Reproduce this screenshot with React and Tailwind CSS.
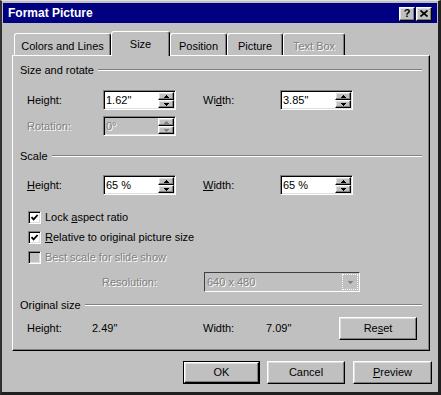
import React from "react";

const raised =
  "border border-t-white border-l-white border-r-black border-b-black shadow-[inset_-1px_-1px_0_#808080,inset_1px_1px_0_#dfdfdf]";
const sunken =
  "border border-t-[#808080] border-l-[#808080] border-r-white border-b-white shadow-[inset_1px_1px_0_#000,inset_-1px_-1px_0_#dfdfdf]";
const dis = "text-[#808080] [text-shadow:1px_1px_0_#fff]";

function Tri({ up, disabled }) {
  return (
    <svg width="5" height="3" viewBox="0 0 5 3" shapeRendering="crispEdges">
      {up ? (
        <polygon points="2.5,0 5,3 0,3" fill={disabled ? "#808080" : "#000"} />
      ) : (
        <polygon points="0,0 5,0 2.5,3" fill={disabled ? "#808080" : "#000"} />
      )}
    </svg>
  );
}

function SpinBtn({ up, disabled }) {
  return (
    <div className={`${raised} h-[8px] flex items-center justify-center bg-[#c0c0c0]`}>
      <Tri up={up} disabled={disabled} />
    </div>
  );
}

function SpinField({ value, disabled }) {
  return (
    <div
      className={`${sunken} w-[73px] h-[20px] flex items-stretch p-[1px] ${
        disabled ? "bg-[#c0c0c0]" : "bg-white"
      }`}
    >
      <div className={`flex-1 flex items-center pl-[1px] ${disabled ? dis : "text-black"}`}>
        {value}
      </div>
      <div className="w-[16px] flex flex-col">
        <SpinBtn up disabled={disabled} />
        <SpinBtn disabled={disabled} />
      </div>
    </div>
  );
}

function GroupHeader({ children }) {
  return (
    <div className="h-[14px] flex items-center pl-[7px] pr-[7px]">
      <span className="leading-[14px]">{children}</span>
      <div className="flex-1 ml-[4px] h-[2px] border-t border-t-[#808080] border-b border-b-white" />
    </div>
  );
}

function Check({ checked, disabled, children }) {
  return (
    <div className="h-[13px] flex items-center pl-[15px]">
      <div
        className={`${sunken} w-[13px] h-[13px] flex items-center justify-center ${
          disabled ? "bg-[#c0c0c0]" : "bg-white"
        }`}
      >
        {checked && (
          <svg width="9" height="9" viewBox="0 0 9 9">
            <path d="M1.5 4.2 L3.6 6.4 L7.6 2" stroke="#000" strokeWidth="1.8" fill="none" />
          </svg>
        )}
      </div>
      <span className={`ml-[4px] ${disabled ? dis : ""}`}>{children}</span>
    </div>
  );
}

function Tab({ w, selected, disabled, children }) {
  return (
    <div
      className={`${
        selected ? "h-[25px] -mb-[1px] z-20" : "h-[22px]"
      } relative bg-[#c0c0c0] border-l border-t border-l-white border-t-white border-r border-r-black rounded-t-[3px] shadow-[inset_-1px_0_0_#808080] flex justify-center pt-[6px] leading-[13px]`}
      style={{ width: w }}
    >
      <span className={disabled ? dis : ""}>{children}</span>
    </div>
  );
}

function Button({ w, children, def }) {
  const inner = (
    <div className={`${raised} h-full w-full flex items-center justify-center bg-[#c0c0c0]`}>
      {children}
    </div>
  );
  if (def)
    return (
      <div className="border border-black h-[23px]" style={{ width: w }}>
        {inner}
      </div>
    );
  return (
    <div className="h-[23px]" style={{ width: w }}>
      {inner}
    </div>
  );
}

export default function App() {
  return (
    <div className="w-[441px] h-[395px] bg-[#c0c0c0] font-['Liberation_Sans',Arial,sans-serif] text-[11px] text-black leading-[13px] border-l-2 border-l-[#303030] border-r-[3px] border-r-[#202020] border-b-[3px] border-b-[#202020] border-t border-t-[#dfdfdf] pl-[1px] pr-[1px] pt-[2px] flex flex-col overflow-hidden">
      {/* Title bar */}
      <div className="h-[20px] bg-[#000080] flex items-center pl-[5px] pr-[5px]">
        <span className="text-white font-bold text-[12px] leading-[14px]">Format Picture</span>
        <div className="ml-auto flex gap-[1px] mt-[1px]">
          <div className={`${raised} w-[16px] h-[14px] bg-[#c0c0c0] flex items-center justify-center font-bold text-[11px] leading-[11px]`}>
            ?
          </div>
          <div className={`${raised} w-[16px] h-[14px] bg-[#c0c0c0] flex items-center justify-center`}>
            <svg width="8" height="7" viewBox="0 0 8 7">
              <path d="M0.5 0.5 L7.5 6.5 M7.5 0.5 L0.5 6.5" stroke="#000" strokeWidth="1.7" />
            </svg>
          </div>
        </div>
      </div>

      {/* Tabs */}
      <div className="flex items-end ml-[11px] h-[24px] mt-[8px] relative z-10">
        <Tab w={97}>Colors and Lines</Tab>
        <Tab w={59} selected>Size</Tab>
        <Tab w={57}>Position</Tab>
        <Tab w={56}>Picture</Tab>
        <Tab w={62} disabled>Text Box</Tab>
      </div>

      {/* Panel */}
      <div className="ml-[9px] w-[418px] h-[296px] border border-t-white border-l-white border-r-black border-b-black shadow-[inset_-1px_-1px_0_#808080] flex flex-col">
        <div className="mt-[7px]">
          <GroupHeader>Size and rotate</GroupHeader>
        </div>
        <div className="mt-[13px] h-[20px] flex items-center pl-[14px]">
          <span className="w-[76px]">
            Hei<u>g</u>ht:
          </span>
          <SpinField value={'1.62"'} />
          <span className="w-[104px] pl-[27px]">
            Wi<u>d</u>th:
          </span>
          <SpinField value={'3.85"'} />
        </div>
        <div className="mt-[6px] h-[20px] flex items-center pl-[14px]">
          <span className={`w-[76px] ${dis}`}>Rotation:</span>
          <SpinField value="0°" disabled />
        </div>

        <div className="mt-[13px]">
          <GroupHeader>Scale</GroupHeader>
        </div>
        <div className="mt-[12px] h-[20px] flex items-center pl-[14px]">
          <span className="w-[76px]">
            <u>H</u>eight:
          </span>
          <SpinField value="65 %" />
          <span className="w-[104px] pl-[27px]">
            <u>W</u>idth:
          </span>
          <SpinField value="65 %" />
        </div>
        <div className="mt-[16px]">
          <Check checked>
            Lock <u>a</u>spect ratio
          </Check>
        </div>
        <div className="mt-[7px]">
          <Check checked>
            <u>R</u>elative to original picture size
          </Check>
        </div>
        <div className="mt-[7px]">
          <Check disabled>Best scale for slide show</Check>
        </div>
        <div className="mt-[8px] h-[20px] flex items-center pl-[14px]">
          <span className={`w-[177px] pl-[75px] ${dis}`}>Resolution:</span>
          <div className="w-[156px] h-[20px] border border-t-[#404040] border-l-[#404040] border-r-white border-b-white flex items-stretch p-[1px] bg-[#c0c0c0]">
            <div className={`flex-1 flex items-center pl-[1px] ${dis}`}>640 x 480</div>
            <div className="w-[16px] border border-dotted border-[#ffffff] flex items-center justify-center">
              <Tri disabled />
            </div>
          </div>
        </div>

        <div className="mt-[6px]">
          <GroupHeader>Original size</GroupHeader>
        </div>
        <div className="mt-[5px] h-[23px] flex items-center pl-[14px]">
          <span className="w-[65px]">Height:</span>
          <span className="w-[111px]">2.49"</span>
          <span className="w-[63px]">Width:</span>
          <span className="w-[73px]">7.09"</span>
          <Button w={78}>
            <span>
              Re<u>s</u>et
            </span>
          </Button>
        </div>
      </div>

      {/* Bottom buttons */}
      <div className="mt-[10px] flex justify-end pr-[5px]">
        <Button w={77} def>
          OK
        </Button>
        <div className="ml-[7px]">
          <Button w={78}>Cancel</Button>
        </div>
        <div className="ml-[8px]">
          <Button w={79}>
            <span>
              <u>P</u>review
            </span>
          </Button>
        </div>
      </div>
    </div>
  );
}
